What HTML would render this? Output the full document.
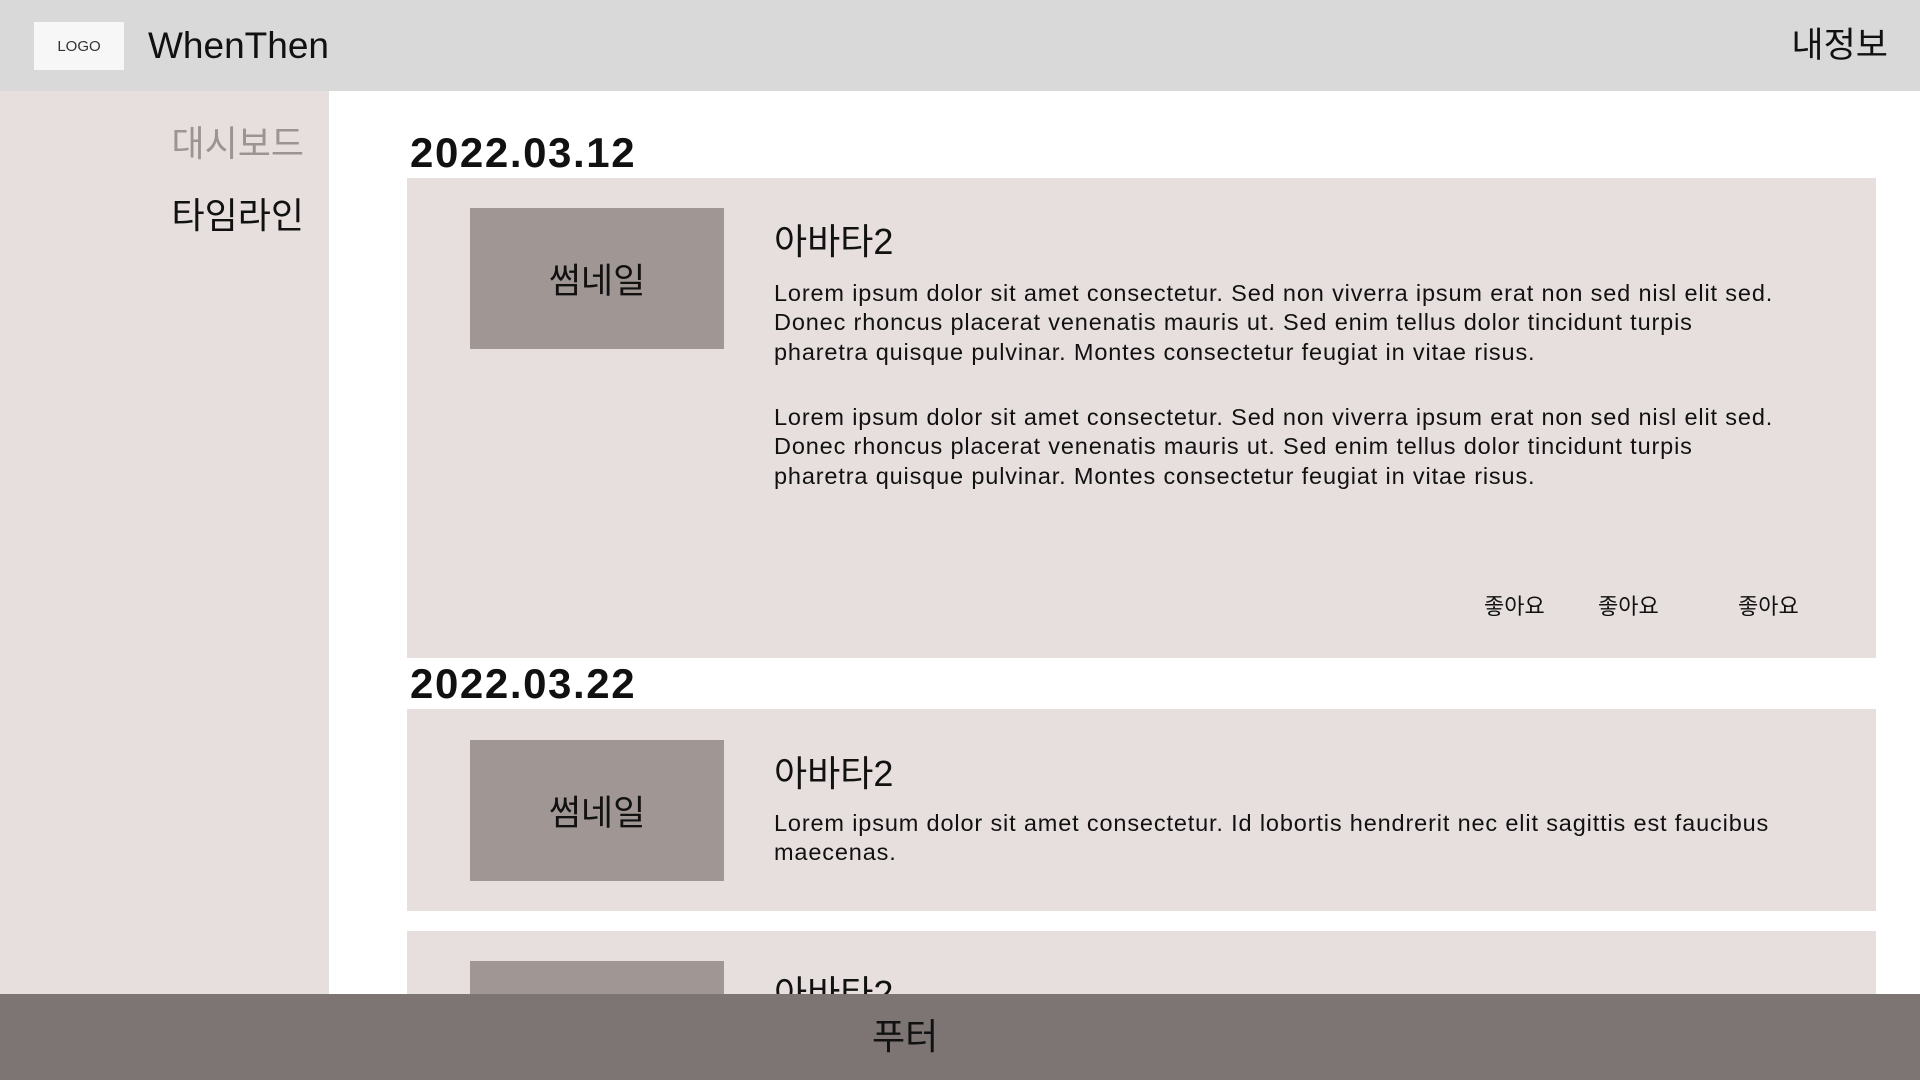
<!DOCTYPE html>
<html style="overflow:hidden;height:1080px"><head><meta charset="utf-8"><style>
*{margin:0;padding:0;box-sizing:border-box}
body{width:1920px;height:1080px;overflow:hidden;background:#fff;font-family:"Liberation Sans","Noto Sans CJK KR",sans-serif;color:#111;position:relative}
.a{position:absolute;white-space:nowrap}
.hdr{left:0;top:0;width:1920px;height:91px;background:#d9d9d9}
.logo{left:34px;top:22px;width:90px;height:48px;background:#f7f7f7;font-size:15px;color:#333;display:flex;align-items:center;justify-content:center}
.side{left:0;top:91px;width:329px;height:903px;background:#e7dfde}
.foot{left:0;top:994px;width:1920px;height:86px;background:#7d7474}
.card{left:407px;width:1469px;background:#e7dfde}
.th{left:470px;width:254px;height:141px;background:#a09795;font-size:35px;display:flex;align-items:center;justify-content:center}
.date{left:410px;font-size:42px;font-weight:bold;line-height:1;letter-spacing:1.6px}
.t{left:774px;font-size:36px;line-height:1}
.p{left:774px;font-size:23.5px;line-height:29.4px;white-space:normal;width:1010px;letter-spacing:0.85px}
.l{font-size:22px;top:589px}
</style></head><body>
<div class="a hdr"></div>
<div class="a logo">LOGO</div>
<div class="a" style="left:148px;top:24px;font-size:37px;line-height:44px">WhenThen</div>
<div class="a" style="right:32px;top:24px;font-size:35px;line-height:44px">내정보</div>
<div class="a side"></div>
<div class="a" style="right:1616px;top:122px;font-size:36px;color:#9a9494;line-height:44px">대시보드</div>
<div class="a" style="right:1616px;top:194px;font-size:36px;line-height:44px">타임라인</div>

<div class="a date" style="top:132px">2022.03.12</div>
<div class="a card" style="top:178px;height:480px"></div>
<div class="a th" style="top:208px">썸네일</div>
<div class="a t" style="top:224px">아바타2</div>
<div class="a p" style="top:279px">Lorem ipsum dolor sit amet consectetur. Sed non viverra ipsum erat non sed nisl elit sed. Donec rhoncus placerat venenatis mauris ut. Sed enim tellus dolor tincidunt turpis pharetra quisque pulvinar. Montes consectetur feugiat in vitae risus.</div>
<div class="a p" style="top:403px">Lorem ipsum dolor sit amet consectetur. Sed non viverra ipsum erat non sed nisl elit sed. Donec rhoncus placerat venenatis mauris ut. Sed enim tellus dolor tincidunt turpis pharetra quisque pulvinar. Montes consectetur feugiat in vitae risus.</div>
<div class="a l" style="left:1484px">좋아요</div>
<div class="a l" style="left:1598px">좋아요</div>
<div class="a l" style="left:1738px">좋아요</div>

<div class="a date" style="top:663px">2022.03.22</div>
<div class="a card" style="top:709px;height:202px"></div>
<div class="a th" style="top:740px">썸네일</div>
<div class="a t" style="top:756px">아바타2</div>
<div class="a p" style="top:809px">Lorem ipsum dolor sit amet consectetur. Id lobortis hendrerit nec elit sagittis est faucibus maecenas.</div>

<div class="a card" style="top:931px;height:63px"></div>
<div class="a th" style="top:961px;height:33px"></div>
<div class="a t" style="top:976px">아바타2</div>

<div class="a foot"></div>
<div class="a" style="left:872px;top:1015px;font-size:36px;line-height:44px">푸터</div>
</body></html>
